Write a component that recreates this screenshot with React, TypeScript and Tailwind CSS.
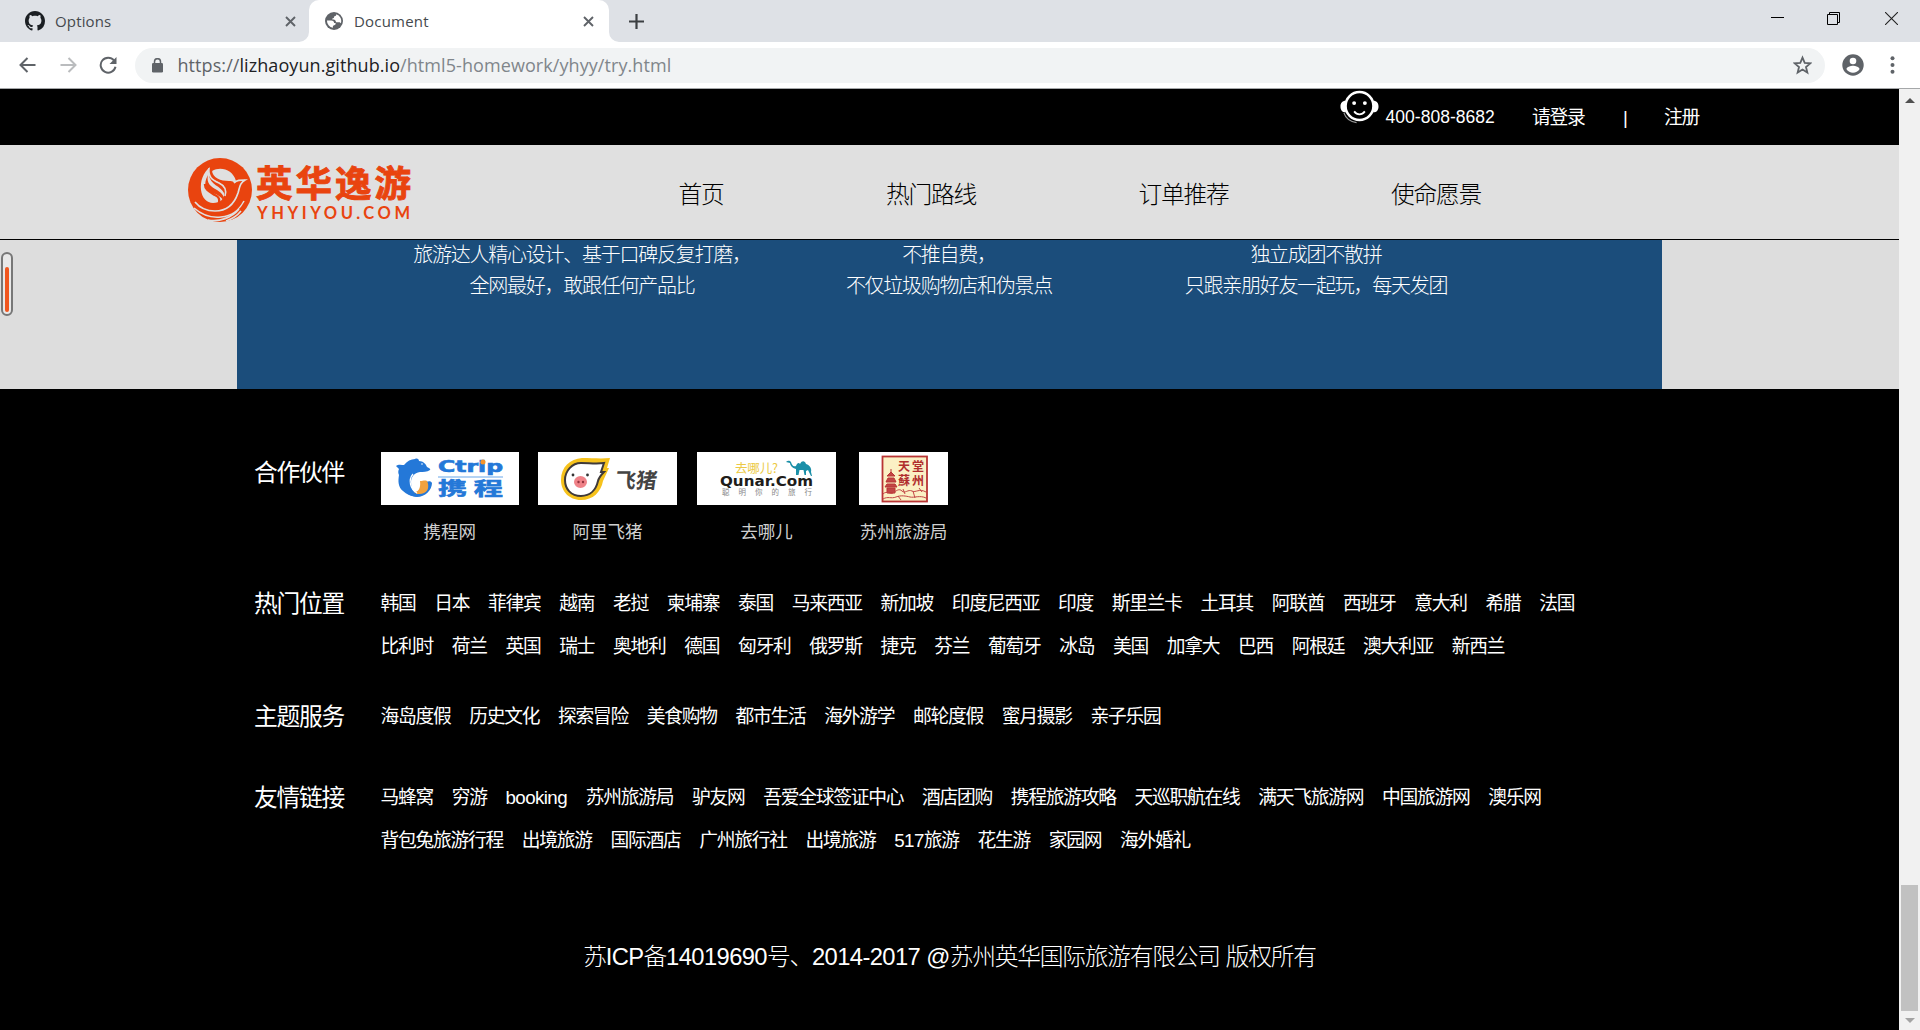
import React from 'react';

const hotPlaces = [
  ['韩国', '日本', '菲律宾', '越南', '老挝', '柬埔寨', '泰国', '马来西亚', '新加坡', '印度尼西亚', '印度', '斯里兰卡', '土耳其', '阿联酋', '西班牙', '意大利', '希腊', '法国'],
  ['比利时', '荷兰', '英国', '瑞士', '奥地利', '德国', '匈牙利', '俄罗斯', '捷克', '芬兰', '葡萄牙', '冰岛', '美国', '加拿大', '巴西', '阿根廷', '澳大利亚', '新西兰'],
];
const services = [['海岛度假', '历史文化', '探索冒险', '美食购物', '都市生活', '海外游学', '邮轮度假', '蜜月摄影', '亲子乐园']];
const friendLinks = [
  ['马蜂窝', '穷游', 'booking', '苏州旅游局', '驴友网', '吾爱全球签证中心', '酒店团购', '携程旅游攻略', '天巡职航在线', '满天飞旅游网', '中国旅游网', '澳乐网'],
  ['背包兔旅游行程', '出境旅游', '国际酒店', '广州旅行社', '出境旅游', '517旅游', '花生游', '家园网', '海外婚礼'],
];

/** Latin runs are set a little looser than the Chinese characters around them. */
function Mixed({ text }: { text: string }) {
  return (
    <>
      {text.split(/([ -~]+)/).map((part, i) =>
        i % 2 ? <span key={i} className="tracking-[-0.6px]">{part}</span> : part,
      )}
    </>
  );
}

function CloseIcon() {
  return (
    <svg className="h-[11px] w-[11px]" viewBox="0 0 11 11" fill="none" stroke="#5f6368" strokeWidth="1.9">
      <path d="M1 1l9 9M10 1l-9 9" />
    </svg>
  );
}

function TabStrip() {
  return (
    <div className="flex h-[42px] bg-[#dee1e6] text-[15px] text-[#45494d]">
      <div className="flex w-[309px] items-center pl-[25px] pr-[13px]">
        <svg className="h-5 w-5 shrink-0" viewBox="0 0 16 16" fill="#1b1f23">
          <path d="M8 0C3.58 0 0 3.58 0 8c0 3.54 2.29 6.53 5.47 7.59.4.07.55-.17.55-.38 0-.19-.01-.82-.01-1.49-2.01.37-2.53-.49-2.69-.94-.09-.23-.48-.94-.82-1.13-.28-.15-.68-.52-.01-.53.63-.01 1.08.58 1.23.82.72 1.21 1.87.87 2.33.66.07-.52.28-.87.51-1.07-1.78-.2-3.64-.89-3.64-3.95 0-.87.31-1.59.82-2.15-.08-.2-.36-1.02.08-2.12 0 0 .67-.21 2.2.82.64-.18 1.32-.27 2-.27s1.36.09 2 .27c1.53-1.04 2.2-.82 2.2-.82.44 1.1.16 1.92.08 2.12.51.56.82 1.27.82 2.15 0 3.07-1.87 3.75-3.65 3.95.29.25.54.73.54 1.48 0 1.07-.01 1.93-.01 2.2 0 .21.15.46.55.38A8.01 8.01 0 0 0 16 8c0-4.42-3.58-8-8-8z" />
        </svg>
        <span className="ml-[10px] grow tracking-[0.15px]">Options</span>
        <CloseIcon />
      </div>
      <div className="relative flex w-[300px] items-center rounded-t-[10px] bg-white pl-[16px] pr-[15px]">
        <svg className="absolute -left-[10px] bottom-0 h-[10px] w-[10px]" viewBox="0 0 10 10"><path d="M10 0v10H0A10 10 0 0 0 10 0z" fill="#fff" /></svg>
        <svg className="absolute -right-[10px] bottom-0 h-[10px] w-[10px]" viewBox="0 0 10 10"><path d="M0 0v10h10A10 10 0 0 1 0 0z" fill="#fff" /></svg>
        <svg className="h-[18px] w-[18px] shrink-0" viewBox="0 0 18 18">
          <circle cx="9" cy="9" r="9" fill="#5f6368" />
          <path d="M11.200 2.200c.2 1.300-.5 1.900-1.500 2.100-.6.100-.7.500-.7 1.100 0 .9-1.800.6-1.800 1.700 0 1 2.300.4 3 1.100.8.800.4 2.100 1.600 2.100h2.300c.8 0 1.200.5 1.700 1A7 7 0 0 0 11.200 2.200zM2 8.600h4.200c1.900 0 2.900.9 2.900 2.500h1.400c.5 1.300-.4 2-1.300 2.100-.9.100-1.300.5-1.300 1.300v1.300A7 7 0 0 1 2 8.600z" fill="#fff" />
        </svg>
        <span className="ml-[11px] grow tracking-[0.2px]">Document</span>
        <CloseIcon />
      </div>
      <svg className="ml-[20px] mt-[14px] h-[15px] w-[15px]" viewBox="0 0 15 15" stroke="#3c4043" strokeWidth="2.2"><path d="M7.500 0v15M0 7.500h15" /></svg>
      <div className="ml-auto flex items-start">
        <svg className="mr-[43px] mt-[17px] h-[2px] w-[13px]" viewBox="0 0 13 2"><path d="M0 .5h13" stroke="#000" /></svg>
        <svg className="mr-[44px] mt-[12px] h-[14px] w-[14px]" viewBox="0 0 14 14" fill="none" stroke="#000"><path d="M.5 2.500h10v10h-10zM2.500 2.500v-2h10v10h-2" /></svg>
        <svg className="mr-[22px] mt-[12px] h-[13px] w-[13px]" viewBox="0 0 13 13" stroke="#222" strokeWidth="1.100"><path d="M0 0l13 13M13 0L0 13" /></svg>
      </div>
    </div>
  );
}

function Toolbar() {
  return (
    <div className="flex h-[47px] items-center border-b border-[#a5a7a9] bg-white">
      <svg className="ml-[19px] h-[16px] w-[17px]" viewBox="0 0 17 16" fill="none" stroke="#5f6368" strokeWidth="2"><path d="M16.500 8H2M8.500 1L1.500 8l7 7" /></svg>
      <svg className="ml-[24px] h-[16px] w-[17px]" viewBox="0 0 17 16" fill="none" stroke="#babcbe" strokeWidth="2"><path d="M.5 8H15M8.500 1l7 7-7 7" /></svg>
      <svg className="ml-[22px] h-[18px] w-[18px]" viewBox="0 0 18 18" fill="none" stroke="#5f6368" strokeWidth="2"><path d="M15 4.400A7.500 7.500 0 1 0 16.500 10.800" /><path d="M17.500 1v7h-7z" fill="#5f6368" stroke="none" /></svg>
      <div className="ml-[18px] flex h-[35px] w-[1690px] items-center rounded-full bg-[#f1f3f4] pl-[17px] pr-[13px]">
        <svg className="h-[15px] w-[11px]" viewBox="0 0 11 15"><rect y="5" width="11" height="9.500" rx="1.300" fill="#5f6368" /><path d="M2.500 6V3.700a3 3 0 0 1 6 0V6" fill="none" stroke="#5f6368" strokeWidth="1.500" /></svg>
        <span className="ml-[14.5px] grow text-[18px] leading-[35px] tracking-[0.075px] text-[#80868b]">
          <span className="text-[#5f6368]">https://</span><span className="text-[#202124]">lizhaoyun.github.io</span>/html5-homework/yhyy/try.html
        </span>
        <svg className="h-[20px] w-[19px]" viewBox="0 0 18 18" fill="none" stroke="#5f6368" strokeWidth="1.700"><path d="M9 2l2.100 5 5.300.400-4.100 3.500 1.300 5.200L9 13.300l-4.600 2.800 1.300-5.200L1.600 7.400 6.900 7z" /></svg>
      </div>
      <svg className="ml-[17px] h-[22px] w-[22px]" viewBox="0 0 22 22"><circle cx="11" cy="11" r="10.700" fill="#5f6368" /><circle cx="11" cy="7" r="3.300" fill="#fff" /><path d="M4.500 15.200c0-2.200 4.300-3.400 6.500-3.400s6.500 1.200 6.500 3.400a7.800 7.800 0 0 1-13 0z" fill="#fff" /></svg>
      <svg className="ml-[26px] h-[18px] w-[5px]" viewBox="0 0 5 18" fill="#5f6368"><circle cx="2.500" cy="2.300" r="2" /><circle cx="2.500" cy="9" r="2" /><circle cx="2.500" cy="15.700" r="2" /></svg>
    </div>
  );
}

function SiteLogo() {
  return (
    <svg className="h-[66px] w-[224px] overflow-visible" viewBox="0 0 224 66">
      <circle cx="32" cy="32" r="32" fill="#e9440f" />
      <path d="M24 13C33 8 45 12 48 23l-2 3c-4-1-7 1-10 2-5-3-13-6-12-15z" fill="#e0e0e0" />
      <path d="M22 9c-7 6-10 14-9 23 1 8 6 13 12 13 7 0 12-4 11-10-3-7-14-8-15-18 0-3 0-5 1-8z" fill="#e0e0e0" />
      <path d="M20 17c-2 8 3 12 9 15 6 4 8 7 7 12-2-5-6-7-11-9-8-3-10-9-5-18z" fill="#e9440f" />
      <path d="M17 26c0 6 5 8 10 11 4 2 5 4 4 8" fill="none" stroke="#e9440f" strokeWidth="2.500" />
      <path d="M21 10c-1 8 2 11 9 14 8 4 11 8 7 16 5-2 8-8 10-13 0-3-2-4-6-4-8 0-17-3-17-11z" fill="#e9440f" />
      <path d="M21 10c-1 9 3 12 10 15 6 3 8 7 6 13" fill="none" stroke="#e0e0e0" strokeWidth="1.600" />
      <path d="M46 25c3-3 6-3 11-3-5 3-5 6-7 13-4 12-12 18-23 18-9 0-16-4-20-9" fill="none" stroke="#e0e0e0" strokeWidth="1.700" />
      <path d="M6 50c8 7 18 10 27 9 11-1 19-8 23-16M20 62c11 2 24-2 31-11M38 63c6-2 11-5 15-10" fill="none" stroke="#e0e0e0" strokeWidth="1.600" />
      <text x="68" y="39" fill="#e9440f" stroke="#e9440f" strokeWidth=".9" fontFamily="'Noto Sans CJK SC', sans-serif" fontWeight="700" fontSize="36.500" textLength="155" lengthAdjust="spacing">英华逸游</text>
      <text x="69" y="61" fill="#e9440f" fontFamily="Lato, sans-serif" fontWeight="700" fontSize="16.500" textLength="153" lengthAdjust="spacing">YHYIYOU.COM</text>
    </svg>
  );
}

function SiteHeader() {
  return (
    <header>
      <div className="flex h-[56px] bg-black text-[18.75px] leading-[58px] tracking-[-1.25px] text-white">
        <svg className="ml-[1340px] mt-[1px] h-[34px] w-[39px] shrink-0" viewBox="0 0 40 34">
          <circle cx="20" cy="16" r="14.300" fill="none" stroke="#fff" strokeWidth="2.600" />
          <path d="M6 10.500v12C2 22.500.5 20 .5 16.500S2 10.500 6 10.500zM34 10.500v12c4 0 5.500-2.500 5.500-6s-1.500-6-5.500-6z" fill="#fff" />
          <circle cx="14.500" cy="13" r="2" fill="#fff" /><circle cx="25.500" cy="13" r="2" fill="#fff" />
          <path d="M14.500 21.500c3 4 8 4 11 0" fill="none" stroke="#fff" strokeWidth="1.800" />
          <path d="M4 23c2 6 6 9 13 10" fill="none" stroke="#999" strokeWidth="1.200" />
        </svg>
        <span className="ml-[6.5px] w-[146.5px] text-[17.5px] leading-[57px] tracking-[0.03px]">400-808-8682</span>
        <span className="w-[91px]">请登录</span>
        <span className="w-[41px]">|</span>
        <span>注册</span>
      </div>
      <div className="flex h-[95px] border-b border-black bg-[#e0e0e0] pl-[188px] pt-[13px]">
        <SiteLogo />
        <nav className="ml-[266.5px] mt-[14px] flex gap-[162.5px] text-[23.75px] font-light leading-[46px] tracking-[-1.25px] text-black">
          <span>首页</span><span>热门路线</span><span>订单推荐</span><span>使命愿景</span>
        </nav>
      </div>
    </header>
  );
}

function Promises() {
  return (
    <section className="relative flex h-[149px] bg-[#ddd] pl-[237px]">
      <div className="absolute left-[1px] top-[12px] flex h-[64px] w-[12px] items-end rounded-full border-2 border-[#777] bg-[#e8e8e8] p-[2px]">
        <div className="h-[45px] w-full rounded-full bg-[#f0561f]" />
      </div>
      <div className="flex w-[1425px] bg-[#1b4d7b] pl-[160px] text-center text-[20px] font-light leading-[31px] tracking-[-1.25px] text-white">
        <p className="w-[370px]">旅游达人精心设计、基于口碑反复打磨，<br />全网最好，敢跟任何产品比</p>
        <p className="w-[364px]">不推自费，<br />不仅垃圾购物店和伪景点</p>
        <p className="w-[370px]">独立成团不散拼<br />只跟亲朋好友一起玩，每天发团</p>
      </div>
    </section>
  );
}

function Partner({ name, box, children }: { name: string; box: string; children: React.ReactNode }) {
  return (
    <div className={'flex flex-col items-center ' + box}>
      <div className="h-[53px] w-full bg-white">{children}</div>
      <span className="whitespace-nowrap text-[17.5px] leading-[54px] text-[#cfcfcf]">{name}</span>
    </div>
  );
}

function CtripLogo() {
  return (
    <svg className="h-[53px] w-[138px]" viewBox="0 0 138 53">
      <path d="M15 14c2-2 6-1 8-1 3-4 7-6 11-6 2-1 4 0 4 2 4 0 7 3 8 6 2 1 4 2 3 3-3 2-7 2-10 2-6 1-9 5-9 10 0 7 4 13 11 13-6 3-14 1-19-4-5-4-5-10-4-16-1-2-1-4 0-6-1-1-2-2-3-3z" fill="#2478d8" />
      <path d="M23 36c4 6 10 8 16 5 5-2 7-6 6-11 3-1 5-1 6 1 0 7-7 14-15 14-6 0-11-4-13-9z" fill="#2478d8" />
      <path d="M39 29c3 0 5-1 7 0 2 4 2 10-3 12-4 2-8 1-10-1 4 0 7-3 6-11z" fill="#f1a23e" />
      <path d="M32 22c-5 6-3 15 4 19" stroke="#fff" strokeWidth="1.200" fill="none" />
      <circle cx="41" cy="12" r=".8" fill="#fff" />
      <g fill="#2478d8" stroke="#2478d8" strokeWidth=".6" fontWeight="700">
        <text x="57" y="20" fontSize="15.500" fontFamily="'DejaVu Sans', sans-serif" textLength="65" lengthAdjust="spacingAndGlyphs">Ctrip</text>
        <text x="57" y="43" fontSize="18" fontFamily="'Noto Sans CJK SC', sans-serif" textLength="65" lengthAdjust="spacingAndGlyphs">携 程</text>
      </g>
      <path d="M57 25h65" stroke="#6aa8ea" strokeWidth="1.200" />
      <circle cx="102" cy="10" r="2.500" fill="#f4942c" />
    </svg>
  );
}

function FliggyLogo() {
  return (
    <svg className="h-[53px] w-[139px]" viewBox="0 0 139 53">
      <path d="M72 6l-3 10 2 0-6 13C63 40 55 48 43 48 31 48 23 39 23 28 23 15 32 7 44 6c10 0 19 1 28 0z" fill="#f6c21c" />
      <path d="M66 11l-3 9h3c-3 3-5 5-6 9-2 9-8 15-17 15-10 0-16-7-16-16s7-17 16-17c8 0 16 1 23 0z" fill="#fff" stroke="#3f3a3a" strokeWidth="2" />
      <ellipse cx="42.500" cy="30" rx="6.500" ry="6" fill="#ef8288" /><circle cx="40.500" cy="30" r="1.200" fill="#92333d" /><circle cx="45" cy="30" r="1.200" fill="#92333d" />
      <circle cx="35" cy="23" r="1.400" fill="#333" /><circle cx="49.500" cy="23" r="1.400" fill="#333" />
      <text x="76" y="36" fontSize="21" fontWeight="700" fill="#444" fontFamily="'Noto Sans CJK SC', sans-serif" textLength="42" transform="translate(5 0) skewX(-8)">飞猪</text>
    </svg>
  );
}

function QunarLogo() {
  return (
    <svg className="h-[53px] w-[139px]" viewBox="0 0 139 53">
      <text x="38" y="20.500" fontSize="12.500" fill="#ecc944" fontFamily="'Noto Sans CJK SC', sans-serif" textLength="43">去哪儿?</text>
      <text x="23" y="33.500" fontSize="14" fontWeight="700" fill="#201c1a" fontFamily="'DejaVu Sans', sans-serif" textLength="93" lengthAdjust="spacingAndGlyphs">Qunar.Com</text>
      <text x="25" y="43" fontSize="7.500" fill="#888" fontFamily="'Noto Sans CJK SC', sans-serif" textLength="90">聪明你的旅行</text>
      <path d="M89 10c2-2 4-1 5 0 1 3 2 5 5 4 1-3 3-4 4-2 2-4 5-3 6 0 4 1 6 5 5 8l1 4h-1l-3-6-2 1v4h-1.500l-1-5h-4l-1 5H99v-6c-4-1-6-4-6-6z" fill="#1a8fa8" />
    </svg>
  );
}

function SuzhouLogo() {
  return (
    <svg className="h-[53px] w-[89px]" viewBox="0 0 89 53">
      <rect x="23.500" y="4.500" width="44.500" height="45" fill="#fbf0c4" stroke="#b93434" strokeWidth="1.800" />
      <g fill="#b02e2e" fontFamily="'Noto Sans CJK SC', sans-serif" fontWeight="700" fontSize="12">
        <text x="39" y="19">天</text><text x="53" y="19">堂</text><text x="39" y="33">蘇</text><text x="53" y="33">州</text>
      </g>
      <path d="M32 17v4M28 24l4-4 4 4zM27 30l2-4h6l2 4zM26 35l2-3h8l2 3zM28 36h8v5h-8z" fill="#c24545" stroke="#b93434" />
      <path d="M24 42c4-4 7 1 10-1s6-5 9-2 6-2 10 0 7-3 14 1M24 47c5-3 8 0 13-2s10-1 14 0 10-2 16 1M44 37l2 5M54 39l2 7M60 36l3 4M39 44l3 4" fill="none" stroke="#c24545" strokeWidth="1" />
    </svg>
  );
}

function Row({ title, lines, className }: { title: string; lines: string[][]; className: string }) {
  return (
    <section className={'flex leading-[43px] ' + className}>
      <h2 className="w-[126.5px] text-[23.75px]">{title}</h2>
      <div>
        {lines.map((line, i) => (
          <ul key={i} className="flex h-[43px] gap-[18.75px] whitespace-nowrap text-[18.75px]">
            {line.map((t, j) => <li key={j}><Mixed text={t} /></li>)}
          </ul>
        ))}
      </div>
    </section>
  );
}

function Footer() {
  return (
    <footer className="h-[641px] bg-black pt-[61px] tracking-[-1.25px] text-white">
      <div className="pl-[254px]">
        <section className="flex h-[132px]">
          <h2 className="w-[127px] text-[23.75px] leading-[45px]">合作伙伴</h2>
          <div className="flex pt-[2px] tracking-normal">
            <Partner name="携程网" box="w-[137.5px]"><CtripLogo /></Partner>
            <Partner name="阿里飞猪" box="ml-[19.5px] w-[139px]"><FliggyLogo /></Partner>
            <Partner name="去哪儿" box="ml-[20px] w-[139px]"><QunarLogo /></Partner>
            <Partner name="苏州旅游局" box="ml-[23px] w-[89px]"><SuzhouLogo /></Partner>
          </div>
        </section>
        <Row title="热门位置" lines={hotPlaces} className="" />
        <Row title="主题服务" lines={services} className="mt-[27px]" />
        <Row title="友情链接" lines={friendLinks} className="mt-[38px]" />
      </div>
      <p className="mt-[73px] text-center text-[23.75px] font-light leading-[44px]"><Mixed text="苏ICP备14019690号、2014-2017 @苏州英华国际旅游有限公司 版权所有" /></p>
    </footer>
  );
}

function Scrollbar() {
  return (
    <div className="flex w-[21px] flex-col items-center bg-[#f1f1f1]">
      <svg className="mt-[9px] h-[5px] w-[10px]" viewBox="0 0 10 5"><path d="M0 5l5-5 5 5z" fill="#505050" /></svg>
      <div className="mt-[782px] h-[126px] w-[17px] bg-[#c1c1c1]" />
      <svg className="mt-[7px] h-[5px] w-[10px]" viewBox="0 0 10 5"><path d="M0 0l5 5 5-5z" fill="#a3a3a3" /></svg>
    </div>
  );
}

export default function App() {
  return (
    <div className="flex h-[1030px] w-[1920px] flex-col overflow-hidden">
      <div className="font-['Open_Sans','Noto_Sans',sans-serif]">
        <TabStrip />
        <Toolbar />
      </div>
      <div className="flex h-[941px]">
        <main className="w-[1899px] font-['Liberation_Sans','Noto_Sans_CJK_SC',sans-serif]">
          <SiteHeader />
          <Promises />
          <Footer />
        </main>
        <Scrollbar />
      </div>
    </div>
  );
}
